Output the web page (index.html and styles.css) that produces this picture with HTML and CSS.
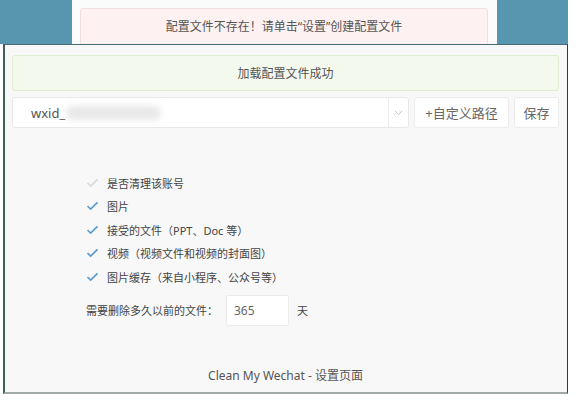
FILE: index.html
```html
<!DOCTYPE html>
<html lang="zh-CN">
<head>
  <meta charset="UTF-8">
  <title>Clean My Wechat - 设置页面</title>
  <link rel="stylesheet" href="styles.css">
</head>
<body>
  <div class="desktop">
    <div class="window back-window">
      <div class="alert alert-danger">配置文件不存在！请单击“设置”创建配置文件</div>
    </div>

    <div class="window front-window">
      <div class="alert alert-success">加载配置文件成功</div>

      <div class="account-row">
        <div class="select">
          <span class="select-value">wxid_<span class="blur"></span></span>
          <span class="select-arrow">
            <svg width="9" height="6" viewBox="0 0 9 6"><polyline points="1,1 4.5,4.5 8,1" fill="none" stroke="#c8c8c8" stroke-width="1"/></svg>
          </span>
        </div>
        <button class="btn btn-path">+自定义路径</button>
        <button class="btn btn-save">保存</button>
      </div>

      <ul class="options">
        <li class="disabled"><svg class="check" viewBox="0 0 14 11"><polyline points="1.5,5.5 5,9 12.5,1.5"/></svg>是否清理该账号</li>
        <li><svg class="check" viewBox="0 0 14 11"><polyline points="1.5,5.5 5,9 12.5,1.5"/></svg>图片</li>
        <li><svg class="check" viewBox="0 0 14 11"><polyline points="1.5,5.5 5,9 12.5,1.5"/></svg>接受的文件（PPT、Doc 等）</li>
        <li><svg class="check" viewBox="0 0 14 11"><polyline points="1.5,5.5 5,9 12.5,1.5"/></svg>视频（视频文件和视频的封面图）</li>
        <li><svg class="check" viewBox="0 0 14 11"><polyline points="1.5,5.5 5,9 12.5,1.5"/></svg>图片缓存（来自小程序、公众号等）</li>
      </ul>

      <div class="days-row">
        <span>需要删除多久以前的文件：</span>
        <input class="days-input" type="text" value="365">
        <span>天</span>
      </div>

      <div class="footer">Clean My Wechat - 设置页面</div>
    </div>
  </div>
</body>
</html>
```

FILE: styles.css
```css
body {
  margin: 0;
  background: #ffffff;
  font-family: "Noto Sans", "Noto Sans CJK SC", sans-serif;
  font-size: 12px;
  color: #444;
}
.desktop {
  position: relative;
  width: 568px;
  height: 396px;
  background: linear-gradient(#5895ae, #5895ae) no-repeat 0 0 / 100% 44px;
}
.window {
  position: absolute;
  box-sizing: border-box;
}
.back-window {
  left: 72px;
  top: 0;
  width: 425px;
  height: 44px;
  background: #fafbfb;
  padding: 8px 9px 0 8px;
}
.alert {
  box-sizing: border-box;
  border: 1px solid;
  border-radius: 3px;
  display: flex;
  align-items: center;
  justify-content: center;
  color: #555;
}
.alert-danger {
  height: 40px;
  background: #fdf2f1;
  border-color: #f3dede;
  padding-bottom: 4px;
}
.front-window {
  left: 3px;
  top: 44px;
  width: 565px;
  height: 350px;
  background: #f8f8f8;
  border-left: 2px solid #3e5f5a;
  border-right: 1px solid #3a3a3a;
  border-bottom: 2px solid #a2aaa9;
  border-top: 1px solid #4a6a78;
  padding: 10px 8px 0 7px;
  display: flex;
  flex-direction: column;
}
.alert-success {
  height: 36px;
  background: #f4f9ee;
  border-color: #dfeed2;
}
.account-row {
  display: flex;
  gap: 5px;
  margin-top: 6px;
  height: 31px;
}
.select {
  flex: 1;
  display: flex;
  background: #fff;
  border: 1px solid #e8e8e8;
  border-radius: 3px;
}
.select-value {
  flex: 1;
  display: flex;
  align-items: center;
  padding-left: 18px;
  font-size: 13px;
  color: #555;
}
.blur {
  display: inline-block;
  width: 95px;
  height: 14px;
  margin-left: 1px;
  background: #e8e8e8;
  border-radius: 7px;
  filter: blur(3px);
}
.select-arrow {
  width: 19px;
  border-left: 1px solid #ececec;
  display: flex;
  align-items: center;
  justify-content: center;
}
.btn {
  font-family: inherit;
  font-size: 13px;
  color: #666;
  background: #fff;
  border: 1px solid #ececec;
  border-radius: 3px;
  padding: 0;
}
.btn-path {
  width: 95px;
}
.btn-save {
  width: 45px;
}
.options {
  list-style: none;
  margin: 43px 0 0 0;
  padding: 0 0 0 74px;
  font-size: 11px;
}
.options li {
  display: flex;
  align-items: center;
  height: 23.5px;
  color: #444;
}
.check {
  width: 13px;
  height: 10px;
  margin-right: 8px;
  fill: none;
  stroke: #5b9bcc;
  stroke-width: 1.8;
}
.disabled .check {
  stroke: #d8d8d8;
}
.days-row {
  display: flex;
  align-items: center;
  gap: 8px;
  margin-top: 6px;
  padding-left: 74px;
  font-size: 11px;
}
.days-input {
  box-sizing: border-box;
  width: 63px;
  height: 31px;
  border: 1px solid #ececec;
  border-radius: 2px;
  background: #fff;
  padding: 0 7px;
  font-family: inherit;
  font-size: 12px;
  color: #666;
}
.footer {
  margin-top: auto;
  padding-bottom: 8px;
  text-align: center;
  color: #555;
}
```
